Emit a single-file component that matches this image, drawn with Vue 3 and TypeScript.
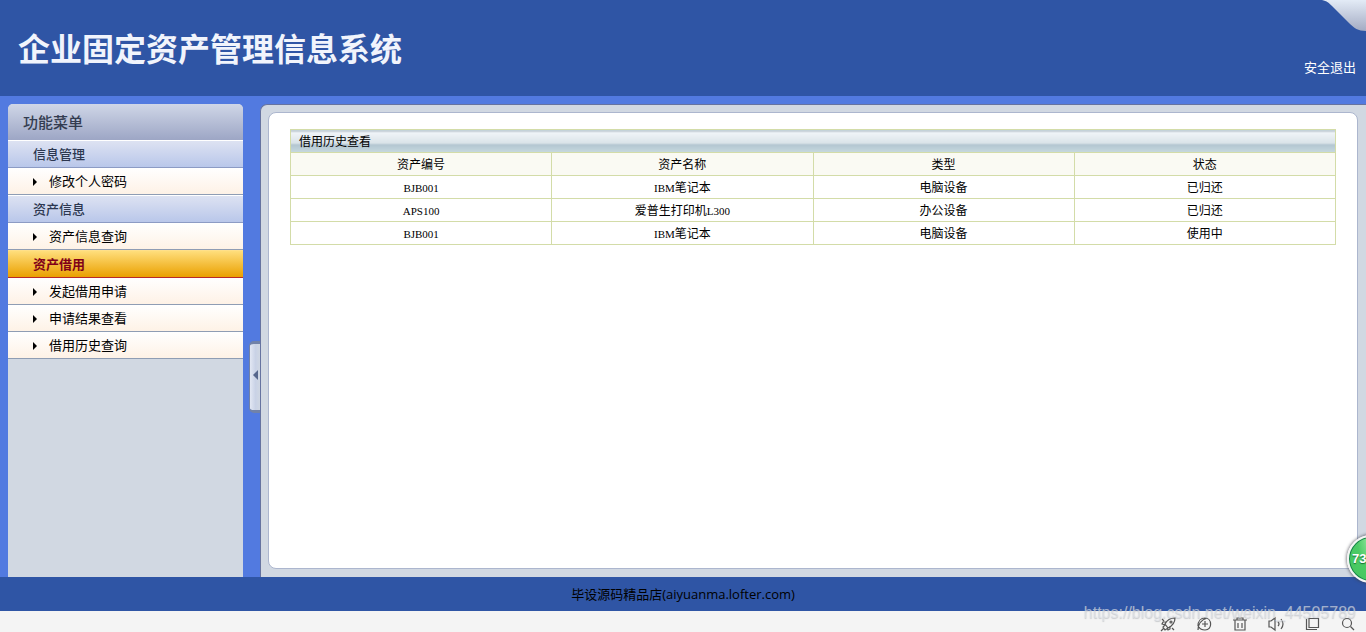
<script setup lang="ts">
interface MenuGroup {
  title: string
  active?: boolean
  items: string[]
}

const groups: MenuGroup[] = [
  { title: '信息管理', items: ['修改个人密码'] },
  { title: '资产信息', items: ['资产信息查询'] },
  { title: '资产借用', active: true, items: ['发起借用申请', '申请结果查看', '借用历史查询'] },
]

const columns: string[] = ['资产编号', '资产名称', '类型', '状态']

const rows: string[][] = [
  ['BJB001', 'IBM笔记本', '电脑设备', '已归还'],
  ['APS100', '爱普生打印机L300', '办公设备', '已归还'],
  ['BJB001', 'IBM笔记本', '电脑设备', '使用中'],
]

interface Run {
  text: string
  latin: boolean
}

// Latin letters and digits are set in a narrow serif beside the Chinese text.
function runs(value: string): Run[] {
  return (value.match(/[A-Za-z0-9]+|[^A-Za-z0-9]+/g) ?? []).map((text) => ({
    text,
    latin: /^[A-Za-z0-9]/.test(text),
  }))
}
</script>

<template>
  <div class="page">
    <header class="header">
      <h1>企业固定资产管理信息系统</h1>
      <a class="logout" href="#">安全退出</a>
      <svg class="corner" viewBox="0 0 44 31" aria-hidden="true">
        <defs>
          <linearGradient id="cornerFill" x1="0" y1="0" x2="0" y2="1">
            <stop offset="0" stop-color="#e3ebf6" />
            <stop offset="1" stop-color="#a3abc3" />
          </linearGradient>
        </defs>
        <path d="M0 0C5 1 7 3 10 6L27 23C32 28 36 31 44 31V0Z" fill="url(#cornerFill)" />
      </svg>
    </header>

    <div class="body">
      <nav class="sidebar">
        <h2>功能菜单</h2>
        <section v-for="group in groups" :key="group.title">
          <button type="button" class="group" :class="{ active: group.active }">{{ group.title }}</button>
          <ul>
            <li v-for="item in group.items" :key="item">
              <a href="#">
                <svg class="arrow" viewBox="0 0 4 8" aria-hidden="true"><path d="M0 0L4 4L0 8Z" /></svg>
                <span>{{ item }}</span>
              </a>
            </li>
          </ul>
        </section>
      </nav>

      <div class="splitter">
        <button type="button" class="handle" aria-label="收起菜单">
          <svg viewBox="0 0 5 10" aria-hidden="true"><path d="M5 0V10L0 5Z" /></svg>
        </button>
      </div>

      <main class="frame">
        <div class="sheet">
          <table>
            <thead>
              <tr class="caption">
                <th colspan="4">借用历史查看</th>
              </tr>
              <tr class="columns">
                <th v-for="column in columns" :key="column" scope="col">{{ column }}</th>
              </tr>
            </thead>
            <tbody>
              <tr v-for="(row, r) in rows" :key="r">
                <td v-for="(cell, c) in row" :key="c">
                  <span v-for="(run, i) in runs(cell)" :key="i" :class="{ latin: run.latin }">{{ run.text }}</span>
                </td>
              </tr>
            </tbody>
          </table>
        </div>
      </main>
    </div>

    <footer class="footer">毕设源码精品店(aiyuanma.lofter.com)</footer>

    <div class="toolbar">
      <button type="button" aria-label="加速">
        <svg viewBox="0 0 16 16">
          <path d="M5 8C7 4 10 2 15 2C15 7 12 10 8 12ZM6 6H3L2 8L5 9M10 10V13L8 14L7 12M5 9L3 11L5 14L8 12M1 15L4 12M2 3L4 5M12 12L14 14" />
          <circle cx="11" cy="6" r="1" />
        </svg>
      </button>
      <button type="button" aria-label="下载">
        <svg viewBox="0 0 16 16">
          <path d="M2 14C2 8 5 4 11 2M2 10C2 5 5 2 9 2C16 2 17 14 9 14C6 14 4 13 3 11M6 8H12M9 5V11" />
        </svg>
      </button>
      <button type="button" aria-label="清理">
        <svg viewBox="0 0 16 16">
          <path d="M1 4H15M5 4V2H11V4M3 4V14H13V4M6 7V12M10 7V12" />
        </svg>
      </button>
      <button type="button" aria-label="声音">
        <svg viewBox="0 0 16 16">
          <path d="M1 5H3L7 2V14L3 11H1ZM10 6Q12 8 10 10M13 3Q17 8 13 13" />
        </svg>
      </button>
      <button type="button" aria-label="窗口">
        <svg viewBox="0 0 16 16">
          <path d="M5 2.500H14.500V11.500H5ZM2.500 3V13.500H13" />
        </svg>
      </button>
      <button type="button" aria-label="搜索">
        <svg viewBox="0 0 16 16">
          <circle cx="7" cy="7" r="4.500" />
          <path d="M10.500 10.500L14 14" />
        </svg>
      </button>
    </div>

    <div class="watermark">https://blog.csdn.net/weixin_44505789</div>
    <button type="button" class="gauge">73</button>
  </div>
</template>

<style>
body {
  margin: 0;
}
</style>

<style scoped>
.page {
  position: relative;
  display: flex;
  flex-direction: column;
  min-height: 100vh;
  overflow: hidden;
  background: #527ae0;
  font-family: "Noto Sans CJK SC", sans-serif;
  font-size: 13px;
  color: #000;
}

button {
  margin: 0;
  padding: 0;
  border: 0;
  font: inherit;
  background: none;
}

a {
  color: inherit;
  text-decoration: none;
}

.header {
  position: relative;
  display: flex;
  align-items: center;
  justify-content: space-between;
  height: 96px;
  padding: 0 10px 0 18px;
  background: #2f55a5;
}

h1 {
  margin: 0;
  padding-bottom: 2px;
  font-size: 32px;
  line-height: 40px;
  font-weight: 700;
  color: #f1f4fc;
}

.logout {
  margin-top: 38px;
  line-height: 20px;
  color: #fff;
}

.corner {
  position: absolute;
  top: 0;
  right: 0;
  width: 44px;
  height: 31px;
}

.body {
  flex: 1;
  display: flex;
  padding: 8px 0 0 8px;
}

.sidebar {
  width: 235px;
  flex: none;
  overflow: hidden;
  border-radius: 5px 5px 0 0;
  background: #d1d8e2;
}

h2 {
  margin: 0;
  padding-left: 15px;
  font-size: 15px;
  line-height: 36px;
  font-weight: 500;
  color: #333c50;
  background: linear-gradient(#cfd6e7, #9da6c5);
}

.group {
  display: block;
  width: 100%;
  height: 28px;
  padding-left: 25px;
  line-height: 26px;
  text-align: left;
  font-weight: 500;
  color: #2c3750;
  border-top: 1px solid #fff;
  border-bottom: 1px solid #8c9bc4;
  background: linear-gradient(#dde2f2, #b9c7ea);
}

.group.active {
  font-weight: 700;
  color: #800018;
  border-top-color: #ffe08a;
  border-bottom-color: #b82a2a;
  background: linear-gradient(#ffde7c, #eaa000);
}

ul {
  margin: 0;
  padding: 0;
  list-style: none;
}

li a {
  display: flex;
  align-items: center;
  gap: 12px;
  height: 26px;
  padding-left: 25px;
  line-height: 26px;
  border-bottom: 1px solid #8f9db4;
  background: linear-gradient(#fff, #fef2e6);
}

.arrow {
  width: 4px;
  height: 8px;
  margin-top: 2px;
}

.splitter {
  display: flex;
  align-items: center;
  justify-content: flex-end;
  width: 18px;
  flex: none;
}

.handle {
  display: flex;
  align-items: center;
  justify-content: center;
  box-sizing: border-box;
  width: 12px;
  height: 72px;
  margin: 73px 0 0;
  padding-bottom: 4px;
  border: solid #7182a8;
  border-width: 3px 0 3px 1px;
  border-radius: 5px 0 0 5px;
  background: linear-gradient(90deg, #e2e7f3, #c9d2e6 50%, #d1d8e2);
}

.handle svg {
  width: 5px;
  height: 10px;
  fill: #56668c;
}

.frame {
  flex: 1;
  display: flex;
  box-sizing: border-box;
  min-width: 0;
  margin-left: -1px;
  padding: 7px 8px 8px 7px;
  border: solid #6673a0;
  border-width: 1px 0 0 1px;
  border-radius: 7px 0 0 0;
  background: #d1d8e2;
}

.sheet {
  flex: 1;
  padding: 16px 21px;
  border: 1px solid #acb6ce;
  border-radius: 8px;
  background: #fff;
}

table {
  width: 100%;
  table-layout: fixed;
  border-collapse: collapse;
  font-size: 12px;
  line-height: 22px;
}

th,
td {
  height: 22px;
  padding: 0;
  border: 1px solid #d3dca8;
  font-weight: 400;
  text-align: center;
}

.caption th {
  padding-left: 8px;
  text-align: left;
  background: linear-gradient(#c2ccd4 0 1px, #f0f4f8 2px, #d9e3e8 13px, #b2c5d0 14px, #c7d9df);
}

.columns th {
  background: #fafaf3;
}

.latin {
  font-family: "Liberation Serif", serif;
  font-size: 11px;
  line-height: 10px;
}

.footer {
  height: 34px;
  line-height: 34px;
  text-align: center;
  font-family: "Open Sans", "Noto Sans CJK SC", sans-serif;
  background: #2f55a5;
}

.toolbar {
  display: flex;
  justify-content: flex-end;
  align-items: center;
  gap: 20px;
  height: 21px;
  padding-right: 10px;
  background: #f4f4f4;
}

.toolbar button,
.toolbar svg {
  display: block;
  width: 16px;
  height: 16px;
}

.toolbar button {
  margin-top: 4px;
}

.toolbar svg {
  fill: none;
  stroke: #555;
  stroke-width: 1.2;
}

.watermark {
  position: absolute;
  right: 10px;
  bottom: 9px;
  font-family: "Liberation Sans", sans-serif;
  font-size: 16px;
  line-height: 20px;
  color: rgba(225, 228, 234, 0.65);
  text-shadow: 0 1px 1px rgba(120, 125, 135, 0.35);
  pointer-events: none;
}

.gauge {
  position: absolute;
  right: -29px;
  bottom: 49px;
  width: 48px;
  height: 48px;
  box-sizing: border-box;
  padding: 0 0 2px 3px;
  text-align: left;
  font-family: "Liberation Sans", sans-serif;
  font-size: 13px;
  font-weight: 700;
  color: #fff;
  text-shadow: 0 1px 1px #176b35;
  border: 2px solid #f4f4f4;
  border-radius: 50%;
  background: radial-gradient(ellipse at 50% 0, #9fe9a6, #4ccb66 45%, #42c45c);
  box-shadow: 0 0 3px 1px rgba(60, 60, 70, 0.6), inset 0 0 0 1px #16804a;
}
</style>
